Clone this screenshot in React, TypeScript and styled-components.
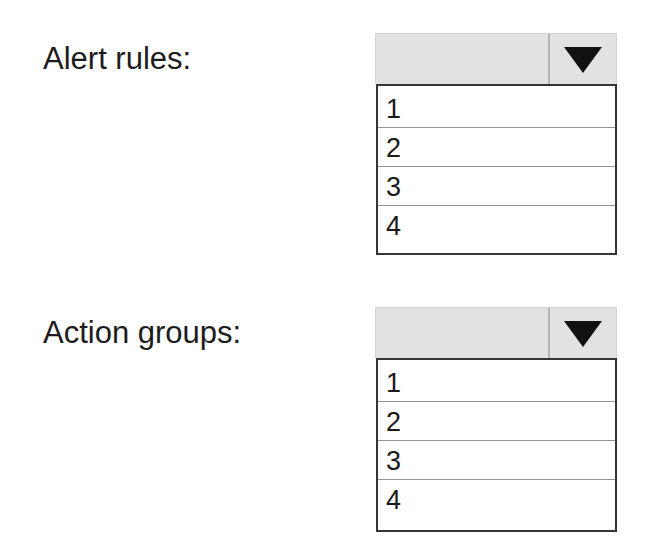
import React from 'react';
import styled, { createGlobalStyle } from 'styled-components';

const GlobalStyle = createGlobalStyle`
  html, body {
    margin: 0;
    padding: 0;
    background: #ffffff;
  }
  body {
    font-family: "Liberation Sans", Arial, sans-serif;
    color: #1e1e1e;
  }
`;

const Page = styled.div`
  width: 666px;
  height: 557px;
  box-sizing: border-box;
  padding: 33px 0 0 43px;
  display: flex;
  flex-direction: column;
  gap: 52px;
`;

const Block = styled.div`
  display: flex;
  align-items: flex-start;
`;

const Label = styled.div`
  width: 332px;
  font-size: 31px;
  line-height: 51px;
  color: #1c1c1c;
`;

const Control = styled.div`
  width: 242px;
  display: flex;
  flex-direction: column;
`;

const Header = styled.div`
  height: 51px;
  box-sizing: border-box;
  display: flex;
  background: #e2e2e2;
  border: 1px solid #d2d2d2;
  border-bottom: none;
`;

const Field = styled.div`
  flex: 1;
`;

const ArrowButton = styled.div`
  width: 66px;
  display: flex;
  align-items: center;
  justify-content: center;
  border-left: 2px solid #b4b4b4;
  padding-top: 2px;
`;

const List = styled.div<{ $height: number }>`
  box-sizing: border-box;
  height: ${(p) => p.$height}px;
  margin-left: 1px;
  border: 2px solid #353535;
  padding: 3px 0 0;
  background: #fff;
`;

const Option = styled.div`
  box-sizing: border-box;
  height: 39px;
  padding-left: 8px;
  font-size: 27px;
  line-height: 40px;
  color: #1a1a1a;
  border-bottom: 1px solid #969696;
  &:last-child {
    border-bottom: none;
  }
`;

const Arrow = () => (
  <svg width="38" height="26" viewBox="0 0 38 26">
    <polygon points="0,0 38,0 19,26" fill="#111" />
  </svg>
);

const Dropdown: React.FC<{ height: number }> = ({ height }) => (
  <Control>
    <Header>
      <Field />
      <ArrowButton>
        <Arrow />
      </ArrowButton>
    </Header>
    <List $height={height}>
      {['1', '2', '3', '4'].map((v) => (
        <Option key={v}>{v}</Option>
      ))}
    </List>
  </Control>
);

export default function App() {
  return (
    <>
      <GlobalStyle />
      <Page>
        <Block>
          <Label>Alert rules:</Label>
          <Dropdown height={171} />
        </Block>
        <Block>
          <Label>Action groups:</Label>
          <Dropdown height={174} />
        </Block>
      </Page>
    </>
  );
}
